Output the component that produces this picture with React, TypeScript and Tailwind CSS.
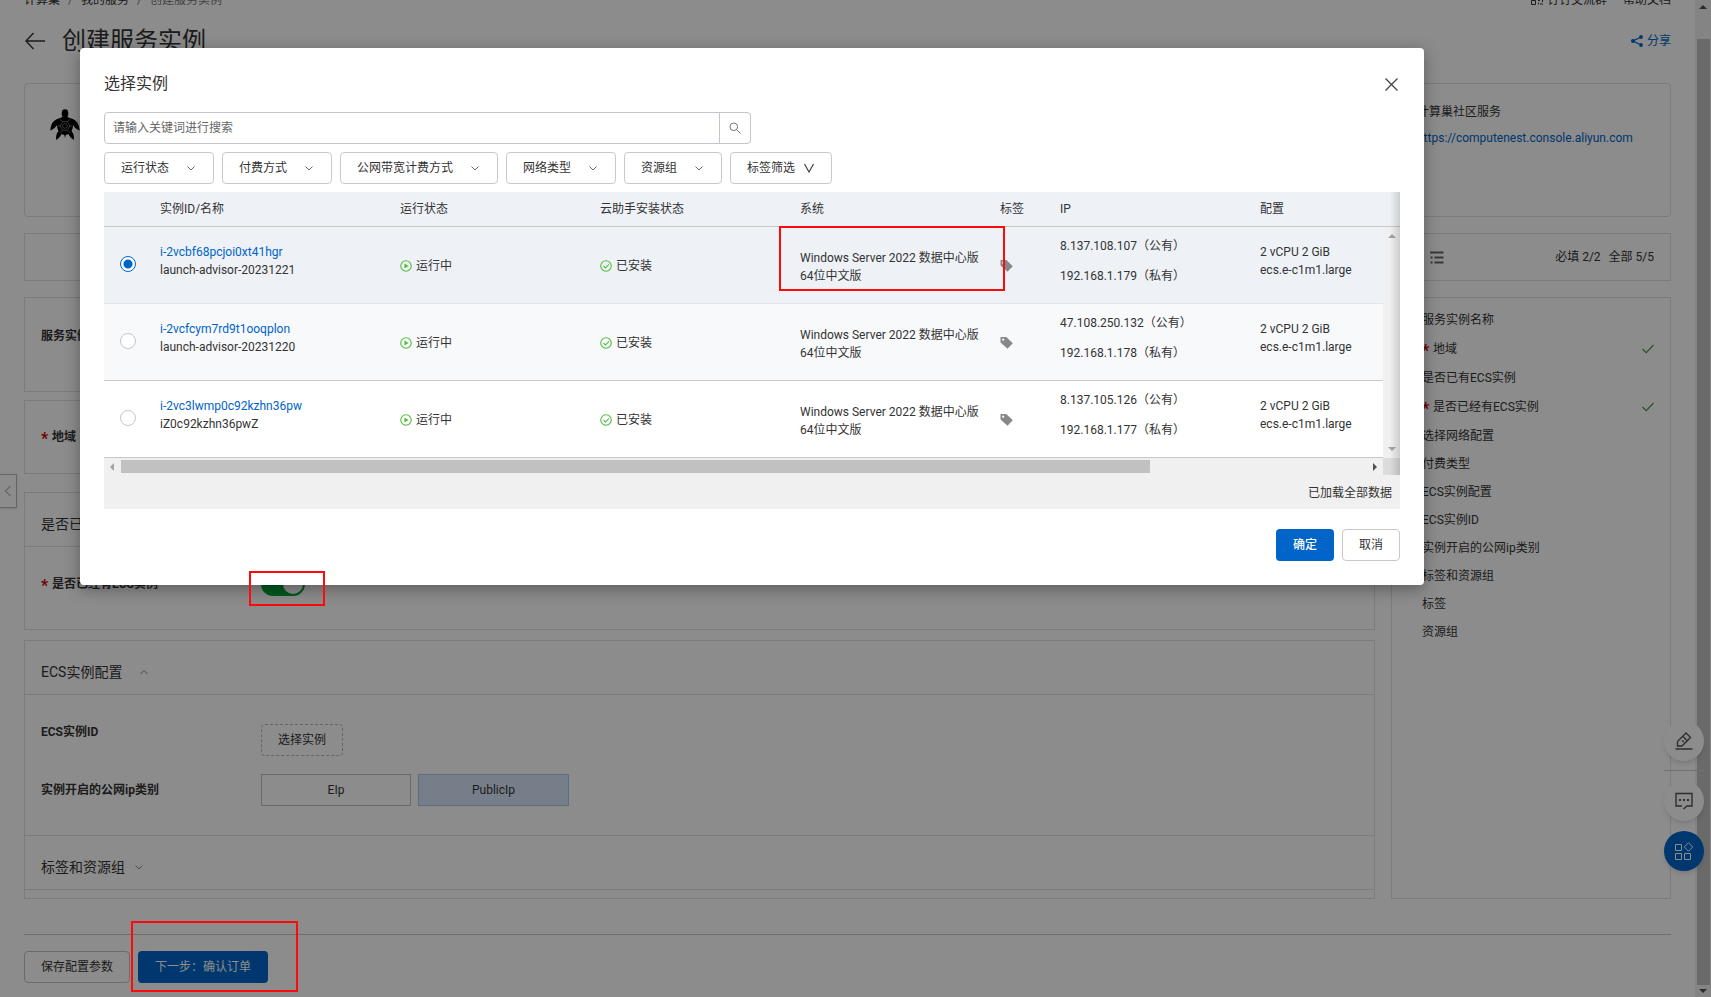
import React from "react";

const border = "border-[#e2e2e2]";

function Chevron({ className = "", dir = "down" }: { className?: string; dir?: "down" | "up" | "left" }) {
  const d = { down: "M2.5 4.5 6 8l3.500-3.500", up: "M2.500 8 6 4.500 9.500 8", left: "M8.500 1 3.500 6l5 5" }[dir];
  return (
    <svg viewBox="0 0 12 12" fill="none" stroke="currentColor" className={className} aria-hidden="true">
      <path d={d} />
    </svg>
  );
}

function Turtle() {
  return (
    <svg viewBox="0 0 30 32" className="h-8 w-[30px]" aria-hidden="true">
      <g fill="#000">
        <ellipse cx="15" cy="4.500" rx="3.300" ry="4.300" />
        <path d="M10.500 9C5 10 1 13 .3 21.500c3-1 5.500-3 7-6l3.200-2.500z" />
        <path d="M19.500 9C25 10 29 13 29.700 21.500c-3-1-5.500-3-7-6l-3.200-2.500z" />
        <path d="M9 21.500c-2 2-3.500 5-2.800 9.500 2.300-1.200 5-4 5.800-7.500z" />
        <path d="M21 21.500c2 2 3.500 5 2.800 9.500-2.300-1.200-5-4-5.800-7.500z" />
        <path d="M15 7.500c5 0 8 4 8 9s-3.500 9.500-8 9.500-8-4.500-8-9.500 3-9 8-9z" />
        <path d="M14 25h2l-1 4z" />
      </g>
      <g fill="none" stroke="#8a8a8a" strokeWidth=".7">
        <path d="m12.500 12.500-3-2.500M17.500 12.500l3-2.500M11 17H7.500M19 17h3.500M12.500 21l-3 3M17.500 21l3 3" />
        <path d="M12.700 12.500h4.600L19.800 17l-2.500 4.300h-4.600L10.200 17z" />
        <circle cx="15" cy="17" r="2.400" />
      </g>
    </svg>
  );
}

function Check() {
  return (
    <svg viewBox="0 0 12 12" className="size-3" fill="none" stroke="#4f8f4f" strokeWidth="1.100" aria-hidden="true">
      <path d="m.5 6 3.700 3.700L11.500 2" />
    </svg>
  );
}

function Star() {
  return <span className="mr-1 inline-block w-[7px] pt-1 text-base leading-4 font-bold text-[#d00000]">*</span>;
}

function Mark({ className }: { className: string }) {
  return <span className={`pointer-events-none absolute z-30 border-2 border-[#ff0a0a] ${className}`} />;
}

const steps: { label: string; required?: boolean }[] = [
  { label: "服务实例名称" },
  { label: "地域", required: true },
  { label: "是否已有ECS实例" },
  { label: "是否已经有ECS实例", required: true },
  { label: "选择网络配置" },
  { label: "付费类型" },
  { label: "ECS实例配置" },
  { label: "ECS实例ID" },
  { label: "实例开启的公网ip类别" },
  { label: "标签和资源组" },
  { label: "标签" },
  { label: "资源组" },
];

const rows = [
  { id: "i-2vcbf68pcjoi0xt41hgr", name: "launch-advisor-20231221", pub: "8.137.108.107", priv: "192.168.1.179", style: "bg-[#eef2f7] [&>td]:border-[#e3e7ec]" },
  { id: "i-2vcfcym7rd9t1ooqplon", name: "launch-advisor-20231220", pub: "47.108.250.132", priv: "192.168.1.178", style: "bg-[#f8f9fb] [&>td]:border-[#c8c8c8]" },
  { id: "i-2vc3lwmp0c92kzhn36pw", name: "iZ0c92kzhn36pwZ", pub: "8.137.105.126", priv: "192.168.1.177", style: "bg-white [&>td]:border-[#c8c8c8]" },
];

const filters = ["运行状态", "付费方式", "公网带宽计费方式", "网络类型", "资源组"];

function Page() {
  return (
    <div className="flex">
      <div className="min-w-0 flex-1 pr-6 pl-6">
        <div className="-mt-2.5 flex h-5 items-center justify-between">
          <nav className="flex gap-2">
            <a href="#nest">计算巢</a>
            <span className="text-[#888]">/</span>
            <a href="#mine">我的服务</a>
            <span className="text-[#888]">/</span>
            <span className="text-[#777]">创建服务实例</span>
          </nav>
          <div className="flex gap-4">
            <a href="#group" className="flex items-center gap-1">
              <svg viewBox="0 0 12 12" className="size-3" fill="none" stroke="#333" aria-hidden="true">
                <path d="M.5.500h4v4h-4zM7.500.500h4v4h-4zM.500 6.500h4v4h-4zM7 6.500h2M11.500 6v2M7.500 8.500v2M9 10h3" />
              </svg>
              钉钉交流群
            </a>
            <a href="#docs">帮助文档</a>
          </div>
        </div>

        <header className="mt-[15px] flex h-8 items-center justify-between">
          <div className="flex items-center gap-4">
            <button type="button" aria-label="返回">
              <svg viewBox="0 0 22 18" className="h-[18px] w-[22px]" fill="none" stroke="#333" strokeWidth="1.400" aria-hidden="true">
                <path d="M9.500 1 2 9l7.500 8M2 9h19" />
              </svg>
            </button>
            <h1 className="text-2xl leading-8">创建服务实例</h1>
          </div>
          <a href="#share" className="flex items-center gap-1 text-[#0064c8]">
            <svg viewBox="0 0 12 12" className="size-3" aria-hidden="true">
              <path d="M10 2 2 6l8 4" fill="none" stroke="currentColor" strokeWidth="1.300" />
              <g fill="currentColor">
                <circle cx="10" cy="2" r="1.900" />
                <circle cx="2" cy="6" r="2" />
                <circle cx="10" cy="10" r="1.900" />
              </g>
            </svg>
            分享
          </a>
        </header>

        <section className={`mt-[26px] flex min-h-[134px] justify-between rounded border ${border} px-[25px] py-[18px]`}>
          <div className="pt-[7px]">
            <Turtle />
          </div>
          <div className="w-[228px]">
            <p className="leading-5">计算巢社区服务</p>
            <a href="https://computenest.console.aliyun.com" className="mt-1.5 block leading-5 text-[#0064c8]">
              https://computenest.console.aliyun.com
            </a>
          </div>
        </section>

        <section className={`mt-4 flex h-12 items-center justify-end border ${border} pr-4`}>
          <svg viewBox="0 0 14 13" className="mr-[111px] h-[13px] w-3.5" fill="none" stroke="#666" strokeWidth="1.800" aria-hidden="true">
            <path d="M0 1.500h13.500M4.500 6.500h9M4.500 11.500h9M.500 6.500h2M.500 11.500h2" />
          </svg>
          <span className="mr-2">必填 2/2</span>
          <span>全部 5/5</span>
        </section>

        <div className="mt-4 grid grid-cols-[minmax(0,1fr)_280px] gap-4">
          <div>
            <section className={`h-[95px] border ${border} px-4 pt-7`}>
              <p className="font-bold leading-5">服务实例名称</p>
            </section>
            <section className={`mt-2 flex h-[74px] items-center border ${border} px-4 font-bold`}>
              <Star />
              地域
            </section>
            <section className={`mt-[18px] border ${border}`}>
              <h2 className={`flex h-[54px] items-center gap-4 border-b ${border} px-4 pt-2 text-sm`}>是否已有ECS实例</h2>
              <div className="flex h-[82px] items-center px-4 pb-2">
                <label htmlFor="has-ecs" className="flex w-[220px] items-center font-bold">
                  <Star />
                  是否已经有ECS实例
                </label>
                <div className="relative flex">
                  <input
                    id="has-ecs"
                    type="checkbox"
                    role="switch"
                    defaultChecked
                    className="h-6 w-11 appearance-none rounded-full bg-[#00a038] before:mt-0.5 before:ml-[22px] before:block before:size-5 before:rounded-full before:bg-white"
                  />
                  <Mark className="-top-px -left-3 h-[35px] w-[76px]" />
                </div>
              </div>
            </section>
            <section className={`mt-2.5 border ${border}`}>
              <h2 className={`flex h-[54px] items-center gap-4 border-b ${border} px-4 pt-2 text-sm`}>
                ECS实例配置
                <Chevron dir="up" className="size-3 text-[#888]" />
              </h2>
              <div className={`border-b ${border} px-4 pt-7 pb-[29px]`}>
                <div className="flex">
                  <span className="w-[220px] font-bold leading-[18px]">ECS实例ID</span>
                  <button type="button" className="mt-px h-8 rounded-sm border border-dashed border-[#bbb] px-4">
                    选择实例
                  </button>
                </div>
                <div className="mt-[18px] flex items-center">
                  <span className="w-[220px] font-bold">实例开启的公网ip类别</span>
                  <button type="button" className="h-8 w-[150px] border border-[#c0c0c0]">
                    EIp
                  </button>
                  <button type="button" className="ml-[7px] h-8 w-[151px] border border-[#a8c8ea] bg-[#d8e8fa]">
                    PublicIp
                  </button>
                </div>
              </div>
              <h2 className={`mb-2 flex h-[54px] items-center gap-2 border-b ${border} px-4 pt-2 text-sm`}>
                标签和资源组
                <Chevron className="size-3 text-[#888]" />
              </h2>
            </section>
          </div>

          <aside className={`border ${border} pt-2 pr-4 pl-[30px]`}>
            <ul>
              {steps.map((s) => (
                <li key={s.label} className={s.required ? "flex h-[30px] items-center" : "flex h-7 items-center"}>
                  {s.required && <Star />}
                  <span className="flex-1">{s.label}</span>
                  {s.required && <Check />}
                </li>
              ))}
            </ul>
          </aside>
        </div>

        <footer className="mt-[35px] flex gap-2 border-t border-[#c8c8c8] pt-4 pb-3.5">
          <button type="button" className="h-8 rounded-sm border border-[#c4c4c4] px-4">
            保存配置参数
          </button>
          <div className="relative">
            <button type="button" className="h-8 w-[130px] rounded-sm bg-[#0064c8] text-white">
              下一步：确认订单
            </button>
            <Mark className="-top-[30px] -left-[7px] h-[71px] w-[167px]" />
          </div>
        </footer>
      </div>

      <div className="flex w-4 flex-col items-center justify-between bg-[#f1f1f1] pt-[5px]" aria-hidden="true">
        <svg viewBox="0 0 8 4" className="h-1 w-2">
          <path d="M0 4 4 0l4 4z" fill="#505050" />
        </svg>
        <div className="mt-[30px] mb-1 w-[13px] flex-1 bg-[#c1c1c1]" />
        <svg viewBox="0 0 8 4" className="mb-1 h-1 w-2">
          <path d="M0 0 4 4l4-4z" fill="#505050" />
        </svg>
      </div>

      <button
        type="button"
        aria-label="展开"
        className="absolute top-[474px] left-0 flex h-[34px] w-[17px] items-center justify-center border border-l-0 border-[#bbb] bg-white shadow"
      >
        <Chevron dir="left" className="size-3 text-[#888]" />
      </button>

      <div className="absolute top-[721px] right-[7px] flex flex-col">
        <button type="button" aria-label="编辑" className="flex size-10 items-center justify-center rounded-full bg-white shadow-md">
          <svg viewBox="0 0 18 18" className="size-[18px]" fill="none" stroke="#555" strokeWidth="1.400" aria-hidden="true">
            <path d="M.5 17h17M2.500 14V9.500l8.500-8.500 4.500 4.500L7 14zM8 4.500l4 4M7 8.500l2 1.500" />
          </svg>
        </button>
        <span className="my-[9px] border-t border-[#ccc]" />
        <button type="button" aria-label="反馈" className="mt-px flex size-10 items-center justify-center rounded-full bg-white shadow-md">
          <svg viewBox="0 0 18 18" className="size-[18px]" fill="none" stroke="#555" strokeWidth="1.400" aria-hidden="true">
            <path d="M7 14H1V1.500h16V14h-5l-3.500 3" />
            <path d="M4 8h2M8 8h2M12 8h2" strokeWidth="1.800" />
          </svg>
        </button>
        <button type="button" aria-label="应用" className="mt-2.5 flex size-10 items-center justify-center rounded-full bg-[#0064c8] shadow-md">
          <svg viewBox="0 0 18 18" className="size-[18px]" fill="none" stroke="#fff" strokeWidth="1" aria-hidden="true">
            <path d="M.5 2.500h6v6h-6zM.500 11.500h6v6h-6zM9.500 11.500h6v6h-6zM13.500.700l4.200 4.300-4.200 4.300L9.300 5z" />
          </svg>
        </button>
      </div>
    </div>
  );
}

function InstanceTable() {
  return (
    <div className="relative mt-2 bg-[#f0f0f0]">
      <div className="flex">
        <table className="min-w-0 flex-1 table-fixed border-separate border-spacing-0 text-left">
          <colgroup>
            <col className="w-12" />
            <col className="w-60" />
            <col className="w-[200px]" />
            <col className="w-[200px]" />
            <col className="w-[200px]" />
            <col className="w-[60px]" />
            <col className="w-[200px]" />
            <col />
          </colgroup>
          <thead>
            <tr className="h-[35px] bg-[#eef2f7] [&>th]:border-b [&>th]:border-[#c8c8c8] [&>th]:px-2 [&>th]:font-normal">
              <th />
              <th>实例ID/名称</th>
              <th>运行状态</th>
              <th>云助手安装状态</th>
              <th>系统</th>
              <th>标签</th>
              <th>IP</th>
              <th>配置</th>
            </tr>
          </thead>
          <tbody>
            {rows.map((r, i) => (
              <tr key={r.id} className={`h-[77px] align-top leading-[18px] [&>td]:border-b [&>td]:px-2 ${r.style}`}>
                <td>
                  <input
                    type="radio"
                    name="instance"
                    aria-label={r.id}
                    defaultChecked={i === 0}
                    className="mx-2 mt-[29px] block size-4 appearance-none rounded-full border border-[#c4c6cf] bg-white checked:border-[#0064c8] checked:bg-[radial-gradient(circle,#0064c8_4px,#fff_5px)]"
                  />
                </td>
                <td className="pt-4">
                  <a href={`#${r.id}`} className="text-[#0064c8]">
                    {r.id}
                  </a>
                  <div>{r.name}</div>
                </td>
                <td className="pt-[30px]">
                  <span className="flex items-center gap-1">
                    <svg viewBox="0 0 13 13" className="size-3" aria-hidden="true">
                      <circle cx="6.500" cy="6.500" r="5.700" fill="none" stroke="#4fbf3c" strokeWidth="1.200" />
                      <path d="M4.800 3.800 9.300 6.500 4.800 9.200z" fill="#4fbf3c" />
                    </svg>
                    运行中
                  </span>
                </td>
                <td className="pt-[30px]">
                  <span className="flex items-center gap-1">
                    <svg viewBox="0 0 13 13" className="size-3" fill="none" stroke="#4fbf3c" strokeWidth="1.200" aria-hidden="true">
                      <circle cx="6.500" cy="6.500" r="5.700" />
                      <path d="m3.800 6.500 2.200 2.200 3.600-4" />
                    </svg>
                    已安装
                  </span>
                </td>
                <td className="relative pt-[22px]">
                  Windows Server 2022 数据中心版
                  <br />
                  64位中文版
                  {i === 0 && <Mark className="-top-px -left-[13px] h-[65px] w-[226px]" />}
                </td>
                <td className="pt-8">
                  <svg viewBox="0 0 13 13" className="size-[13px]" aria-hidden="true">
                    <path fillRule="evenodd" d="M.5 1h5.800l6.500 6.300-5.300 5.500L.500 6.500zM3.200 2.600a1.100 1.100 0 1 0 0 2.200 1.100 1.100 0 0 0 0-2.200z" fill="#888" />
                  </svg>
                </td>
                <td className="pt-2.5">
                  <div>{r.pub}（公有）</div>
                  <div className="mt-3">{r.priv}（私有）</div>
                </td>
                <td className="pt-4">
                  <div>2 vCPU 2 GiB</div>
                  <div>ecs.e-c1m1.large</div>
                </td>
              </tr>
            ))}
          </tbody>
        </table>
        <div className="flex w-[17px] flex-col" aria-hidden="true">
          <div className="h-[35px] border-b border-[#c8c8c8] bg-[#eef2f7]" />
          <div className="flex flex-1 flex-col items-center justify-between py-[7px]">
            <svg viewBox="0 0 8 4" className="h-1 w-2">
              <path d="M0 4 4 0l4 4z" fill="#a3a3a3" />
            </svg>
            <svg viewBox="0 0 8 4" className="h-1 w-2">
              <path d="M0 0 4 4l4-4z" fill="#a3a3a3" />
            </svg>
          </div>
        </div>
      </div>
      <div className="flex h-[17px] items-center" aria-hidden="true">
        <svg viewBox="0 0 4 8" className="mr-[7px] ml-1.5 h-2 w-1">
          <path d="M4 0 0 4l4 4z" fill="#a3a3a3" />
        </svg>
        <div className="flex-1 pr-[217px]">
          <div className="h-[13px] bg-[#c1c1c1]" />
        </div>
        <svg viewBox="0 0 4 8" className="mx-1.5 h-2 w-1">
          <path d="M0 0 4 4 0 8z" fill="#505050" />
        </svg>
        <div className="h-[17px] w-[17px] bg-[#dcdcdc]" />
      </div>
      <p className="h-[34px] pr-2 text-right leading-[36px]">已加载全部数据</p>
      <div className="pointer-events-none absolute top-0 right-0 h-[283px] w-2.5 bg-linear-to-r from-transparent to-black/15" />
    </div>
  );
}

function InstanceDialog() {
  return (
    <div className="absolute inset-0 z-20 pt-12 pr-[287px] pl-20">
      <div role="dialog" aria-modal="true" aria-labelledby="dialog-title" className="rounded bg-white px-6 pt-6 pb-6 shadow-[0_4px_16px_rgba(0,0,0,0.35)]">
        <div className="flex h-6 items-center justify-between">
          <h2 id="dialog-title" className="text-base">
            选择实例
          </h2>
          <button type="button" aria-label="关闭" className="mr-0.5">
            <svg viewBox="0 0 13 13" className="size-[13px]" fill="none" stroke="#444" strokeWidth="1.300" aria-hidden="true">
              <path d="m.5.500 12 12M12.500.500l-12 12" />
            </svg>
          </button>
        </div>

        <form className="mt-4 flex h-8 w-[647px] rounded-sm border border-[#c0c6cc]" onSubmit={(e) => e.preventDefault()}>
          <input type="text" aria-label="搜索" placeholder="请输入关键词进行搜索" className="min-w-0 flex-1 px-2 placeholder:text-[#666]" />
          <button type="submit" aria-label="搜索" className="flex w-[31px] items-center justify-center border-l border-[#c0c6cc]">
            <svg viewBox="0 0 12 12" className="size-3" fill="none" stroke="#777" aria-hidden="true">
              <circle cx="4.800" cy="4.800" r="3.800" />
              <path d="m7.500 7.500 4 4" />
            </svg>
          </button>
        </form>

        <div className="mt-2 flex gap-2">
          {filters.map((f) => (
            <div key={f} className="relative">
              <select aria-label={f} className="h-8 appearance-none rounded-sm border border-[#c8c8c8] bg-white pr-[43px] pl-4">
                <option>{f}</option>
              </select>
              <Chevron className="pointer-events-none absolute top-2.5 right-[17px] size-3 text-[#666]" />
            </div>
          ))}
          <button type="button" className="flex h-8 items-center gap-2 rounded-sm border border-[#c8c8c8] px-4">
            标签筛选
            <svg viewBox="0 0 12 12" className="size-3" fill="none" stroke="#444" strokeWidth="1.200" aria-hidden="true">
              <path d="m1.500 2 4.500 8 4.500-8" />
            </svg>
          </button>
        </div>

        <InstanceTable />

        <div className="mt-5 flex justify-end gap-2">
          <button type="button" className="h-8 w-[58px] rounded-sm bg-[#0064c8] font-medium text-white">
            确定
          </button>
          <button type="button" className="h-8 w-[58px] rounded-sm border border-[#c8c8c8]">
            取消
          </button>
        </div>
      </div>
    </div>
  );
}

export default function App() {
  return (
    <div className="relative min-h-screen overflow-hidden bg-white font-[Roboto,'Noto_Sans_CJK_SC',sans-serif] text-xs text-[#333]">
      <Page />
      <div className="absolute inset-0 z-10 bg-black/45" />
      <InstanceDialog />
    </div>
  );
}
